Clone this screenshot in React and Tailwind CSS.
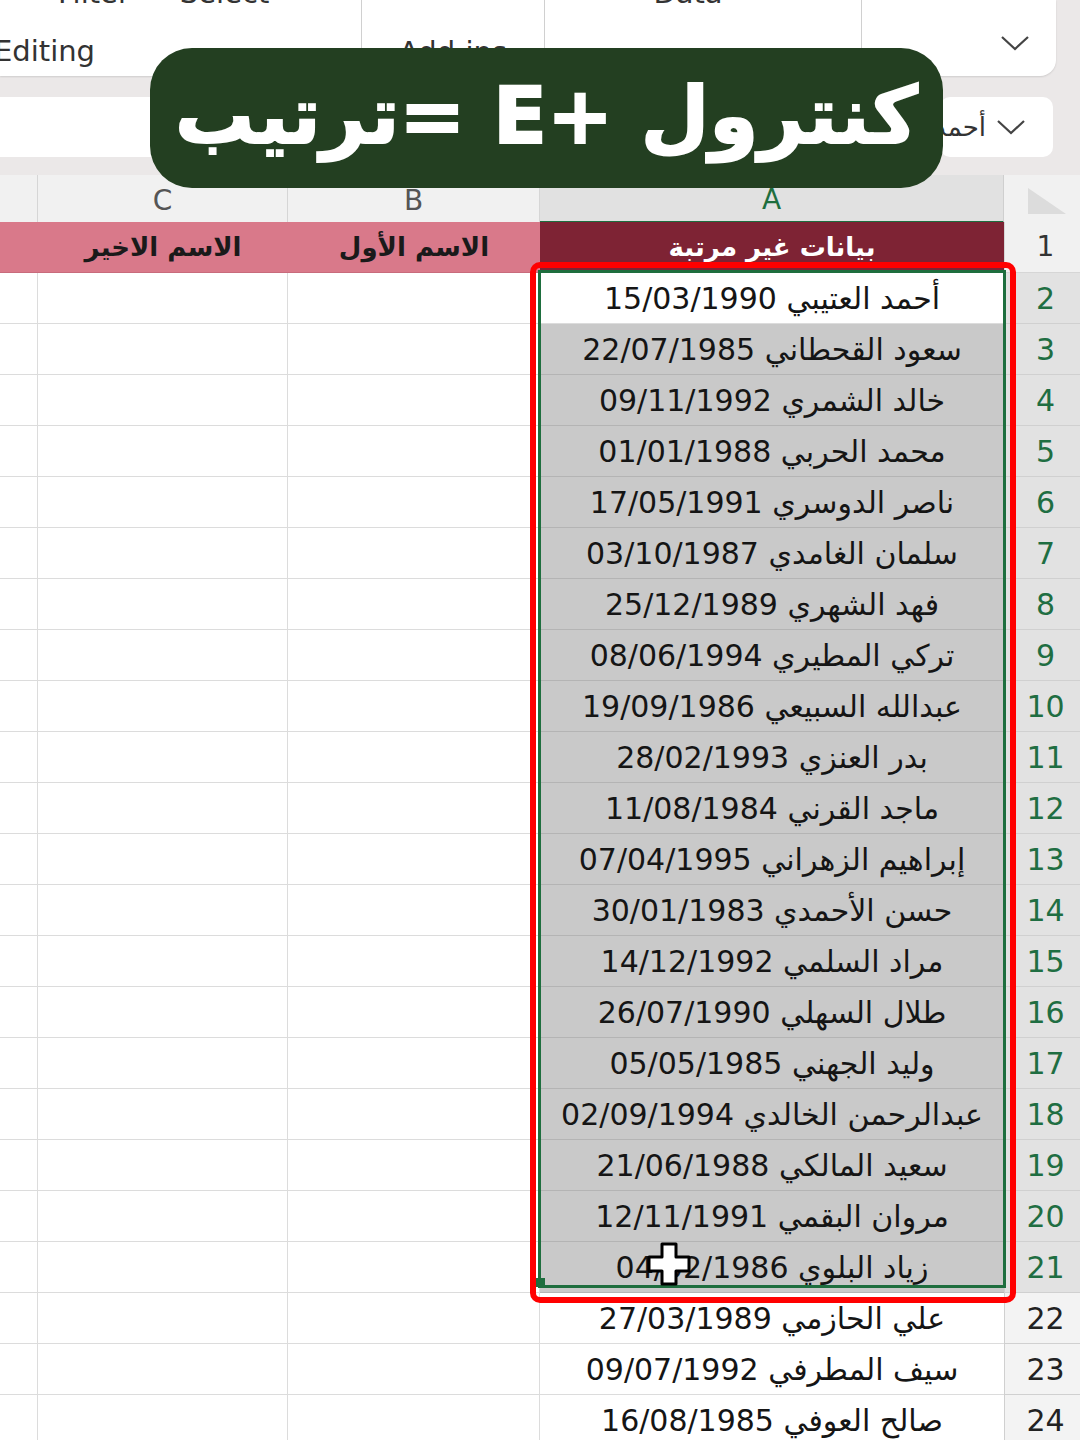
const rows = [
  ['أحمد العتيبي', '15/03/1990'],
  ['سعود القحطاني', '22/07/1985'],
  ['خالد الشمري', '09/11/1992'],
  ['محمد الحربي', '01/01/1988'],
  ['ناصر الدوسري', '17/05/1991'],
  ['سلمان الغامدي', '03/10/1987'],
  ['فهد الشهري', '25/12/1989'],
  ['تركي المطيري', '08/06/1994'],
  ['عبدالله السبيعي', '19/09/1986'],
  ['بدر العنزي', '28/02/1993'],
  ['ماجد القرني', '11/08/1984'],
  ['إبراهيم الزهراني', '07/04/1995'],
  ['حسن الأحمدي', '30/01/1983'],
  ['مراد السلمي', '14/12/1992'],
  ['طلال السهلي', '26/07/1990'],
  ['وليد الجهني', '05/05/1985'],
  ['عبدالرحمن الخالدي', '02/09/1994'],
  ['سعيد المالكي', '21/06/1988'],
  ['مروان البقمي', '12/11/1991'],
  ['زياد البلوي', '04/02/1986'],
  ['علي الحازمي', '27/03/1989'],
  ['سيف المطرفي', '09/07/1992'],
  ['صالح العوفي', '16/08/1985'],
]

const Chevron = ({ className }) => (
  <svg className={className} width="30" height="18" viewBox="0 0 30 18" fill="none">
    <path d="M2 3 L15 15 L28 3" stroke="#444" strokeWidth="2.2" />
  </svg>
)

function Ribbon() {
  return (
    <div className="h-[78px] bg-[#ebe8e8]">
      <div className="h-[76px] w-[1056px] bg-white rounded-br-[16px] flex overflow-hidden shadow-[0_1px_2px_rgba(0,0,0,0.12)] text-[29px] text-[#333]">
        <div className="w-[362px] border-r border-[#d0d0d0]">
          <div className="flex gap-[50px] pl-[58px] -mt-[23px] leading-[32px]">
            <span>Filter</span>
            <span>Select</span>
          </div>
          <div className="-ml-[6px] mt-[26px] leading-[32px]">Editing</div>
        </div>
        <div className="w-[183px] border-r border-[#d0d0d0] flex flex-col items-center pt-[36px]">
          <span className="leading-[32px]">Add-ins</span>
        </div>
        <div className="w-[317px] border-r border-[#d0d0d0] flex justify-center">
          <span className="-mt-[23px] leading-[32px] -ml-[30px]">Data</span>
        </div>
        <div className="flex-1 flex justify-end items-end pb-[24px] pr-[26px]">
          <Chevron />
        </div>
      </div>
    </div>
  )
}

function FormulaBar() {
  return (
    <div className="h-[97px] bg-[#ebe8e8] flex pt-[19px] pb-[18px] gap-[14px]">
      <div className="flex-1 bg-white rounded-r-[10px] h-[60px]" />
      <div className="w-[113px] mr-[27px] h-[60px] bg-white rounded-[10px] flex items-center justify-end pr-[16px] gap-[10px]" dir="rtl">
        <Chevron />
        <span className="text-[26px] text-[#333] w-[46px] overflow-hidden whitespace-nowrap" dir="rtl">أحمد</span>
      </div>
    </div>
  )
}

const cols = 'grid grid-cols-[38px_250px_252px_464px_76px]'

function ColumnHeaders() {
  return (
    <div className={`${cols} h-[47px] text-[28px] text-[#555]`}>
      <div className="bg-[#f1f1f1] border-r border-b border-[#d6d6d6]" />
      <div className="bg-[#f1f1f1] border-r border-b border-[#d6d6d6] flex items-center justify-center pt-[4px]">C</div>
      <div className="bg-[#f1f1f1] border-r border-b border-[#d6d6d6] flex items-center justify-center pt-[4px]">B</div>
      <div className="bg-[#e1e1e1] border-r border-b-2 border-[#cfcfcf] border-b-[#1e6e3e] flex items-center justify-center pt-[4px] text-[#1e6e3e]">A</div>
      <div className="bg-[#f1f1f1] border-b border-[#d6d6d6] flex items-end justify-end pr-[12px] pb-[6px]">
        <svg width="44" height="30" viewBox="0 0 44 30">
          <path d="M4 2 L42 28 L4 28 Z" fill="#dcdcdc" />
        </svg>
      </div>
    </div>
  )
}

function HeaderRow() {
  return (
    <div className={`${cols} h-[51px] text-[26px] font-bold`} dir="ltr">
      <div className="bg-[#d9798a] border-b border-[#c86b7c]" />
      <div className="bg-[#d9798a] border-b border-[#c86b7c] flex items-center justify-center text-[#1a1a1a]" dir="rtl">الاسم الاخير</div>
      <div className="bg-[#d9798a] border-b border-[#c86b7c] flex items-center justify-center text-[#1a1a1a]" dir="rtl">الاسم الأول</div>
      <div className="bg-[#7e2334] border-b border-[#6a1d2b] flex items-center justify-center text-white" dir="rtl">بيانات غير مرتبة</div>
      <div className="bg-[#f1f1f1] border-b border-l border-[#d6d6d6] flex items-center justify-center pl-[6px] font-normal text-[28px] text-[#333]">1</div>
    </div>
  )
}

function DataRow({ n, name, date }) {
  const selected = n <= 21
  const active = n === 2
  return (
    <div className={`${cols} h-[51px]`}>
      <div className="bg-white border-r border-b border-[#dcdcdc]" />
      <div className="bg-white border-r border-b border-[#dcdcdc]" />
      <div className="bg-white border-r border-b border-[#dcdcdc]" />
      <div
        className={`border-b flex items-center justify-center text-[30px] text-[#151515] whitespace-nowrap ${
          selected && !active ? 'bg-[#c9c9c9] border-[#b4b4b4]' : 'bg-white border-[#dcdcdc]'
        }`}
        dir="rtl"
      >
        {name} {date}
      </div>
      <div
        className={`border-l border-b border-[#d0d0d0] flex items-center justify-center pl-[6px] text-[30px] ${
          selected ? 'bg-[#e2e2e2] text-[#1f6e42]' : 'bg-[#f3f3f3] text-[#222]'
        }`}
      >
        {n}
      </div>
    </div>
  )
}

export default function App() {
  return (
    <div className="relative w-[1080px] h-[1440px] overflow-hidden bg-white font-['DejaVu_Sans',sans-serif]">
      <Ribbon />
      <FormulaBar />
      <ColumnHeaders />
      <HeaderRow />
      {rows.map(([name, date], i) => (
        <DataRow key={i} n={i + 2} name={name} date={date} />
      ))}

      {/* selection outline */}
      <div className="absolute left-[538px] top-[270px] w-[468px] h-[1018px] border-[3px] border-[#1e6e3e] pointer-events-none" />
      <div className="absolute left-[536px] top-[1278px] w-[9px] h-[9px] bg-[#1e6e3e]" />

      {/* red annotation frame */}
      <div className="absolute left-[530px] top-[262px] w-[486px] h-[1041px] border-[6px] border-[#ff0000] rounded-[10px] pointer-events-none" />

      {/* cursor */}
      <svg className="absolute left-[646px] top-[1241px]" width="46" height="46" viewBox="0 0 46 46">
        <path
          d="M16 3 H30 V16 H43 V30 H30 V43 H16 V30 H3 V16 H16 Z"
          fill="#fff"
          stroke="#000"
          strokeWidth="3"
          strokeLinejoin="round"
        />
      </svg>

      {/* title banner */}
      <div className="absolute left-[150px] top-[48px] w-[793px] h-[140px] bg-[#233f21] rounded-[42px] flex items-center justify-center">
        <span dir="rtl" className="text-white text-[79px] font-bold leading-none whitespace-nowrap -mt-[4px] [-webkit-text-stroke:2px_white]">
          كنترول +E =ترتيب
        </span>
      </div>
    </div>
  )
}
